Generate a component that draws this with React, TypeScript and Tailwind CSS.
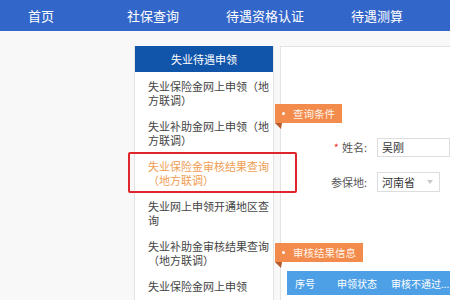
import React from "react";

const navItems = ["首页", "社保查询", "待遇资格认证", "待遇测算"];

const menuItems = [
  "失业保险金网上申领（地方联调）",
  "失业补助金网上申领（地方联调）",
  "失业保险金审核结果查询（地方联调）",
  "失业网上申领开通地区查询",
  "失业补助金审核结果查询（地方联调）",
  "失业保险金网上申领",
];

const Ribbon: React.FC<{ label: string }> = ({ label }) => (
  <div className="relative -ml-[6px] flex h-[19px] w-fit items-center bg-[#f38b4c] pl-[7px] pr-[7px] text-[10.5px] text-[#fff3ea]">
    <span className="mr-[8px] h-[3px] w-[3px] rounded-full bg-white" />
    {label}
    <svg className="absolute left-0 top-full" width="7" height="6" viewBox="0 0 7 6">
      <polygon points="0,0 7,0 6,6" fill="#b5582a" />
    </svg>
  </div>
);

const App: React.FC = () => {
  return (
    <div
      className="relative h-[300px] w-[450px] overflow-hidden bg-[#f8f8f8]"
      style={{ fontFamily: '"Noto Sans CJK SC", "Noto Sans", sans-serif' }}
    >
      {/* top nav */}
      <div className="flex h-[31px] items-center bg-[#3366c9]">
        <div className="-ml-[15px] flex">
          {navItems.map((item) => (
            <div key={item} className="w-[112px] text-center text-[13px] leading-none text-white">
              {item}
            </div>
          ))}
        </div>
      </div>

      <div className="flex pt-[15px]">
        {/* sidebar */}
        <div className="ml-[134px] h-[300px] w-[140px] shrink-0 border-x border-[#e3e3e3] bg-white">
          <div className="flex h-[26px] items-center justify-center bg-[#1155aa] text-[11px] text-white">
            失业待遇申领
          </div>
          {menuItems.map((item, i) => (
            <div
              key={item}
              className={`pb-[5px] pl-[13px] pr-[2px] pt-[8px] text-[11px] leading-[13.5px] ${
                i === 2 ? "text-[#ef9d52]" : "text-[#444]"
              }`}
            >
              {item}
            </div>
          ))}
        </div>

        {/* main panel */}
        <div className="ml-[6px] h-[300px] flex-1 border-l border-t border-[#e3e3e3] bg-white">
          <div className="mt-[57px]">
            <Ribbon label="查询条件" />
          </div>

          <div className="mt-[15px] flex flex-col gap-[15px] text-[11px] text-[#555]">
            <div className="flex items-center">
              <div className="w-[86px] text-right">
                <span className="mr-[3px] text-[#e33]">*</span>姓名:
              </div>
              <div className="ml-[10px] flex h-[19px] flex-1 items-center border border-[#ddd] pl-[4px] text-[#333]">
                吴刚
              </div>
            </div>
            <div className="flex items-center">
              <div className="w-[86px] text-right">参保地:</div>
              <div className="ml-[10px] flex h-[20px] w-[63px] items-center justify-between border border-[#ddd] pl-[4px] pr-[6px] text-[#333]">
                河南省
                <svg width="6" height="4" viewBox="0 0 6 4">
                  <polygon points="0,0 6,0 3,4" fill="#c8c8c8" />
                </svg>
              </div>
            </div>
          </div>

          <div className="mt-[51px]">
            <Ribbon label="审核结果信息" />
          </div>

          <div className="ml-[6px] mt-[9px] flex h-[24px] items-center whitespace-nowrap bg-[#4d9fe6] pl-[8px] text-[10px] text-white">
            <div className="w-[42px]">序号</div>
            <div className="w-[54px]">申领状态</div>
            <div>审核不通过...</div>
          </div>
        </div>
      </div>

      {/* annotation box */}
      <div className="absolute left-[128px] top-[152px] h-[41px] w-[169px] rounded-[2px] border-2 border-[#e0262b]" />
    </div>
  );
};

export default App;
